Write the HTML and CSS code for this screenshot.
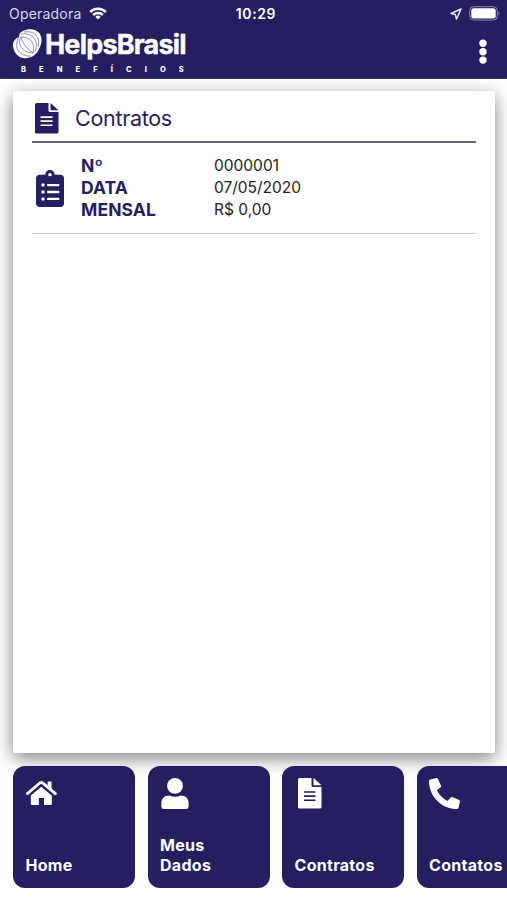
FILE: index.html
```
<!DOCTYPE html>
<html lang="pt-BR">
<head>
    <meta charset="UTF-8">
    <title>HelpsBrasil</title>
    <link rel="stylesheet" href="styles.css">
</head>
<body>
<div id="header">
    <div class="status">
        <div class="left">
            <span class="carrier">Operadora</span>
            <svg class="wifi" width="18" height="13" viewBox="0 0 18 13" fill="none" stroke="#fff" stroke-width="2.5">
                <path d="M1.2 5a11 11 0 0 1 15.600 0M4.200 8a6.800 6.800 0 0 1 9.600 0"/>
                <path d="M9 12.500L6.400 9.900a3.700 3.700 0 0 1 5.200 0z" fill="#fff" stroke="none"/>
            </svg>
        </div>
        <span class="time">10:29</span>
        <div class="right">
            <svg class="gps" width="12" height="12" viewBox="0 0 12 12" fill="none" stroke="#e8e8f4" stroke-width="1.5" stroke-linejoin="round">
                <path d="M11 1L1 5.500l4.400 1.100L6.500 11z"/>
            </svg>
            <svg width="32" height="15" viewBox="0 0 32 15">
                <rect x=".7" y=".7" width="27.6" height="13.4" rx="4" fill="none" stroke="#8b88ae"/>
                <rect x="2.3" y="2.3" width="24.4" height="10.2" rx="2.3" fill="#fff"/>
                <path d="M29.600 5.200q1.900 2.200 0 4.400z" fill="#8b88ae"/>
            </svg>
        </div>
    </div>
    <div class="bar">
        <div class="logo">
            <div class="brand">
                <svg width="30" height="31" viewBox="0 0 30 31" stroke="#231f60" stroke-width=".5">
                    <path d="M10 2C16-1 24 0 27 5c3 6 1 11-1 15-3 7-10 10-16 9C4 28 0 22 0 16 0 12 3 9 6 8 6 5 7 3 10 2z" fill="#fff" stroke="none"/>
                    <path d="M8 8C4 15 9 24 20 24C23 14 17 8 8 8C10 15 14 20 20 24" fill="none"/>
                    <path d="M6 8C0 18 6 28 18 27M8 5C18 3 27 11 22 23M11 3C21 1 28 8 25 18" fill="none"/>
                </svg>
                <span class="name">HelpsBrasil</span>
            </div>
            <div class="sub">BENEFÍCIOS</div>
        </div>
        <svg class="dots" width="8" height="26" viewBox="0 0 8 26" fill="#fff">
            <circle cx="4" cy="4.3" r="3.7"/>
            <circle cx="4" cy="12.7" r="3.7"/>
            <circle cx="4" cy="21.1" r="3.7"/>
        </svg>
    </div>
</div>
<div id="content">
    <div class="title">
        <svg width="24" height="31" viewBox="0 0 24 31" fill="currentColor">
            <path fill-rule="evenodd" d="M1.500 0H13.500V7.500Q13.500 9 15 9H23.500V29Q23.500 30.500 22 30.500H1.500Q0 30.500 0 29V1.500Q0 0 1.500 0zM5.500 13.200v1.700h12v-1.700zM5.500 17.300v1.700h12v-1.700zM5.500 21.400v1.700h12v-1.700z"/>
            <path d="M15.500 0L23.500 7.300H15.500z"/>
        </svg>
        <h1>Contratos</h1>
    </div>
    <div class="item">
        <svg width="28" height="37" viewBox="0 0 384 512" preserveAspectRatio="none" fill="currentColor">
            <path fill-rule="evenodd" d="M336 64h-80c0-35.300-28.700-64-64-64s-64 28.700-64 64H48C21.500 64 0 85.500 0 112v352c0 26.500 21.500 48 48 48h288c26.500 0 48-21.500 48-48V112c0-26.500-21.500-48-48-48zM96 424a24 24 0 1 1 0-48 24 24 0 0 1 0 48zm0-96a24 24 0 1 1 0-48 24 24 0 0 1 0 48zm0-96a24 24 0 1 1 0-48 24 24 0 0 1 0 48zm96-192a24 24 0 1 1 0 48 24 24 0 0 1 0-48zM160 384h152q8 0 8 8v16q0 8-8 8H160q-8 0-8-8v-16q0-8 8-8zm0-96h152q8 0 8 8v16q0 8-8 8H160q-8 0-8-8v-16q0-8 8-8zm0-96h152q8 0 8 8v16q0 8-8 8H160q-8 0-8-8v-16q0-8 8-8z"/>
        </svg>
        <ul class="labels">
            <li>Nº</li>
            <li>DATA</li>
            <li>MENSAL</li>
        </ul>
        <ul class="values">
            <li>0000001</li>
            <li>07/05/2020</li>
            <li>R$ 0,00</li>
        </ul>
    </div>
</div>
<ul id="menu">
    <li>
        <svg class="home" width="31" height="26" viewBox="0 0 31 26" fill="#fff">
            <path d="M21.700 1.500H25.500V11L21.700 8z"/>
            <path d="M15.200 6.700L25.800 15.400V24Q25.800 25 24.800 25H18V18H12.800V25H5.800Q4.800 25 4.800 24V15.400z"/>
            <path d="M1.400 13.600L13.800 3Q15.200 1.900 16.700 3L29.300 13.600" fill="none" stroke="#fff" stroke-width="2.900" stroke-linecap="round"/>
            <path d="M3.500 14.700L15.200 4.900L27.100 14.700" fill="none" stroke="#231f60" stroke-width=".9"/>
        </svg>
        <span>Home</span>
    </li>
    <li>
        <svg class="user" width="28" height="32" viewBox="0 0 28 32" fill="#fff">
            <circle cx="14" cy="7.900" r="7.900"/>
            <path d="M8.500 17.500Q14 20 19.500 17.500C25 17.500 27.600 21 27.600 25V28.500Q27.600 31 25 31H3Q.4 31 .4 28.500V25C.4 21 3 17.500 8.500 17.500z"/>
        </svg>
        <span>Meus<br>Dados</span>
    </li>
    <li>
        <svg class="file" width="24" height="31" viewBox="0 0 24 31" fill="#fff">
            <path fill-rule="evenodd" d="M1.500 0H13.500V7.500Q13.500 9 15 9H23.500V29Q23.500 30.500 22 30.500H1.500Q0 30.500 0 29V1.500Q0 0 1.500 0zM6 13.200v1.600h11.500v-1.600zM6 17.300v1.600h11.500v-1.600zM6 21.400v1.600h11.500v-1.600z"/>
            <path d="M15.500 0L23.500 7.300H15.500z"/>
        </svg>
        <span>Contratos</span>
    </li>
    <li>
        <svg width="31" height="31" viewBox="0 0 512 512" fill="#fff">
            <g transform="matrix(-1 0 0 1 512 0)">
                <path d="M493.400 24.600l-104-24c-11.300-2.600-22.900 3.300-27.500 13.900l-48 112c-4.200 9.800-1.400 21.300 6.900 28l60.600 49.600c-36 76.700-98.900 140.500-177.200 177.200l-49.600-60.600c-6.800-8.300-18.200-11.100-28-6.900l-112 48C3.900 366.500-2 378.100.6 389.400l24 104C27.100 504.200 36.700 512 48 512c256.100 0 464-207.500 464-464 0-11.200-7.700-20.900-18.600-23.400z"/>
            </g>
        </svg>
        <span>Contatos</span>
    </li>
</ul>
</body>
</html>
```
FILE: styles.css
```
*{
    margin: 0;
    padding: 0;
    box-sizing: border-box;
}
body{
    height: 900px;
    overflow: hidden;
    background: #fff;
    color: #231f60;
    font-family: Inter, "Liberation Sans", sans-serif;
}
ul{
    list-style: none;
}
svg{
    display: block;
    flex: none;
}
#header{
    height: 79px;
    background: #231f60;
    color: #fff;
    border-bottom: 1px solid #37336f;
}
.status{
    display: grid;
    grid-template-columns: 1fr auto 1fr;
    align-items: center;
    height: 27px;
    padding: 0 6px 0 9px;
}
.status .left{
    display: flex;
    align-items: center;
    gap: 8px;
}
.carrier{
    color: #d9d8e8;
    font-size: 14px;
    letter-spacing: .2px;
}
.time{
    padding-left: 2px;
    font-size: 14px;
    font-weight: 600;
    letter-spacing: .6px;
}
.status .right{
    display: flex;
    justify-content: flex-end;
    align-items: center;
    gap: 7px;
}
.bar{
    display: flex;
    justify-content: space-between;
    padding: 2px 20px 0 13px;
}
.brand{
    display: flex;
    height: 32px;
    gap: 2px;
}
.name{
    font-size: 27px;
    font-weight: 700;
    line-height: 32px;
    letter-spacing: -.8px;
    -webkit-text-stroke: .4px #fff;
}
.sub{
    padding: 2px 0 0 8px;
    font-size: 7.5px;
    font-weight: 800;
    line-height: 13px;
    letter-spacing: 13.1px;
}
.dots{
    margin-top: 10px;
}
#content{
    height: 662px;
    margin: 12px 12px 0 13px;
    padding: 0 19px;
    background: #fff;
    border-radius: 2px;
    box-shadow: 0 5px 18px rgba(0,0,0,.5);
}
.title{
    display: flex;
    gap: 16px;
    height: 52px;
    padding: 12px 0 0 3px;
    border-bottom: 2px solid #625f8d;
}
.title h1{
    font-size: 21.5px;
    font-weight: 400;
    line-height: 31px;
    letter-spacing: -.3px;
}
.item{
    display: flex;
    height: 91px;
    padding: 12px 0 0 4px;
    border-bottom: 1px solid #ccc;
}
.item svg{
    margin-top: 15px;
}
.labels{
    width: 133px;
    margin: 0 0 0 17px;
    font-size: 17.5px;
    font-weight: 700;
    line-height: 22px;
    letter-spacing: .1px;
}
.values{
    margin-top: 0;
    color: #222;
    font-size: 15.5px;
    line-height: 22px;
}
#menu{
    display: flex;
    gap: 12.5px;
    padding: 13px 0 0 13px;
    overflow: hidden;
}
#menu li{
    display: flex;
    flex: none;
    flex-direction: column;
    justify-content: space-between;
    width: 122px;
    height: 122px;
    padding: 12px 12px 13px 12.5px;
    background: #231f60;
    border-radius: 12px;
    color: #fff;
    font-size: 16px;
    font-weight: 700;
    line-height: 20px;
    letter-spacing: .3px;
}
#menu .home{
    margin-top: 2px;
}
#menu .user{
    margin-left: 1px;
}
#menu .file{
    margin-left: 3px;
}
```
